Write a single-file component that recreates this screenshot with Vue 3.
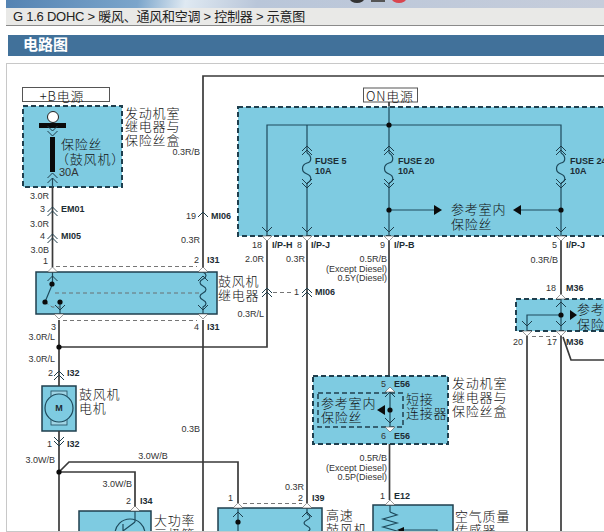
<script setup>
// boxes, wires and labels of the schematic, in page pixels
const blueBoxes = [
  { x: 23, y: 106, w: 99, h: 81, dashed: true },
  { x: 238, y: 107, w: 380, h: 129, dashed: true },
  { x: 36, y: 272, w: 181, h: 42 },
  { x: 42, y: 386, w: 34, h: 45 },
  { x: 516, y: 299, w: 100, h: 32, dashed: true },
  { x: 313, y: 376, w: 135, h: 68, dashed: true },
  { x: 79, y: 511, w: 72, h: 40 },
  { x: 218, y: 508, w: 104, h: 40 },
  { x: 373, y: 505, w: 80, h: 40 }
]

const wires = [
  'M203 270V76H610',
  'M203 320V540',
  'M52.5 187V267',
  'M59 320V386',
  'M59 347H267V236',
  'M307 236V503',
  'M389 102V106',
  'M389 236V375',
  'M389.5 444V500',
  'M561 236V294',
  'M561 336V540',
  'M563 337L571 360H610',
  'M527 336V540',
  'M59 431V540',
  'M59 472L69 462H238V503',
  'M59 472H135V507'
]

const innerWires = [
  'M267 236V125H561V153',
  'M561 183V236',
  'M307 125V153',
  'M307 183V236',
  'M389 106V153',
  'M389 183V236',
  'M389 210H434',
  'M521 210H561',
  'M52.5 178V187',
  'M52.5 267V284L45 302',
  'M60 302V314',
  'M561 299V331',
  'M527 331V315H561',
  'M390 388V426',
  'M135 511V522',
  'M238 508V532',
  'M307 508V514',
  'M390 505V512'
]

const dashed = [
  'M56 266.5H197',
  'M63 320.5H197',
  'M55 293H200',
  'M273 292.5H293',
  'M45 302L52 307H60',
  'M243 503.5H302',
  'M532 336.5H556'
]

const chevrons = [
  { x: 52.5, y: 136, dir: 1 }, { x: 52.5, y: 131, dir: 1 },
  { x: 52.5, y: 173, dir: -1 }, { x: 52.5, y: 178, dir: -1 },
  { x: 52.5, y: 207, dir: -1 }, { x: 52.5, y: 211, dir: -1 },
  { x: 52.5, y: 234, dir: -1 }, { x: 52.5, y: 238, dir: -1 },
  { x: 59, y: 371, dir: -1 }, { x: 59, y: 375, dir: -1 },
  { x: 59, y: 442, dir: 1 }, { x: 59, y: 446, dir: 1 },
  { x: 203, y: 212, dir: -1 },
  { x: 267, y: 288, dir: -1 }, { x: 267, y: 292, dir: -1 },
  { x: 307, y: 288, dir: -1 }, { x: 307, y: 292, dir: -1 },
  { x: 307, y: 146, dir: -1 }, { x: 307, y: 150, dir: -1 },
  { x: 389, y: 146, dir: -1 }, { x: 389, y: 150, dir: -1 },
  { x: 561, y: 146, dir: -1 }, { x: 561, y: 150, dir: -1 },
  { x: 307, y: 184, dir: 1 }, { x: 307, y: 188, dir: 1 },
  { x: 389, y: 184, dir: 1 }, { x: 389, y: 188, dir: 1 },
  { x: 561, y: 184, dir: 1 }, { x: 561, y: 188, dir: 1 },
  { x: 267, y: 232, dir: 1 }, { x: 307, y: 232, dir: 1 },
  { x: 389, y: 232, dir: 1 }, { x: 561, y: 232, dir: 1 },
  { x: 561, y: 302, dir: -1 }, { x: 561, y: 326, dir: 1 }, { x: 527, y: 326, dir: 1 },
  { x: 390, y: 392, dir: -1 }, { x: 390, y: 423, dir: 1 },
  { x: 60, y: 310, dir: 1 }, { x: 52.5, y: 276, dir: -1 },
  { x: 203, y: 276, dir: -1 }, { x: 203, y: 310, dir: 1 },
  { x: 238, y: 512, dir: -1 }, { x: 307, y: 512, dir: -1 }
]

// small white pin notches sitting on a box edge
const pins = [
  { x: 52.5, y: 272, dir: -1 }, { x: 203, y: 272, dir: -1 },
  { x: 59, y: 314, dir: 1 }, { x: 203, y: 314, dir: 1 },
  { x: 267, y: 236, dir: 1 }, { x: 307, y: 236, dir: 1 },
  { x: 389, y: 236, dir: 1 }, { x: 561, y: 236, dir: 1 },
  { x: 561, y: 299, dir: -1 }, { x: 527, y: 331, dir: 1 }, { x: 561, y: 331, dir: 1 },
  { x: 390, y: 392, dir: -1 }, { x: 390, y: 427, dir: 1 },
  { x: 135, y: 511, dir: -1 }, { x: 238, y: 508, dir: -1 }, { x: 307, y: 508, dir: -1 },
  { x: 390, y: 505, dir: -1 }
]

const dots = [
  [59, 347], [389, 125], [389, 210], [561, 210], [52, 284], [45, 302], [60, 302],
  [561, 315], [390, 410], [59, 472], [238, 522]
]

const coils = [307, 389, 561]

const labels = [
  { t: '0.3R/B', x: 200, y: 152, e: 1 },
  { t: '3.0R', x: 49, y: 196, e: 1 },
  { t: '3', x: 45, y: 209, e: 1 }, { t: 'EM01', x: 61, y: 209, b: 1 },
  { t: '3.0R', x: 49, y: 224, e: 1 },
  { t: '4', x: 45, y: 236, e: 1 }, { t: 'MI05', x: 61, y: 236, b: 1 },
  { t: '3.0B', x: 49, y: 250, e: 1 },
  { t: '1', x: 48, y: 261, e: 1 }, { t: '2', x: 199, y: 260, e: 1 }, { t: 'I31', x: 207, y: 260, b: 1 },
  { t: '3', x: 56, y: 327, e: 1 }, { t: '4', x: 199, y: 327, e: 1 }, { t: 'I31', x: 207, y: 327, b: 1 },
  { t: '3.0R/L', x: 55, y: 337, e: 1 }, { t: '3.0R/L', x: 55, y: 359, e: 1 },
  { t: '2', x: 53, y: 373, e: 1 }, { t: 'I32', x: 67, y: 373, b: 1 },
  { t: 'M', x: 59, y: 408, a: 'middle', b: 1 },
  { t: '1', x: 52, y: 444, e: 1 }, { t: 'I32', x: 67, y: 444, b: 1 },
  { t: '3.0W/B', x: 55, y: 460, e: 1 },
  { t: '3.0W/B', x: 153, y: 456, a: 'middle' },
  { t: '3.0W/B', x: 132, y: 484, e: 1 },
  { t: '2', x: 131, y: 501, e: 1 }, { t: 'I34', x: 140, y: 501, b: 1 },
  { t: '0.3B', x: 200, y: 429, e: 1 },
  { t: '19', x: 196, y: 216, e: 1 }, { t: 'MI06', x: 211, y: 216, b: 1 },
  { t: '0.3R', x: 200, y: 240, e: 1 },
  { t: 'FUSE 5', x: 315, y: 161, b: 1 }, { t: '10A', x: 315, y: 171, b: 1 },
  { t: 'FUSE 20', x: 398, y: 161, b: 1 }, { t: '10A', x: 398, y: 171, b: 1 },
  { t: 'FUSE 24', x: 570, y: 161, b: 1 }, { t: '10A', x: 570, y: 171, b: 1 },
  { t: '18', x: 262, y: 245, e: 1 }, { t: 'I/P-H', x: 272, y: 245, b: 1 },
  { t: '8', x: 302, y: 245, e: 1 }, { t: 'I/P-J', x: 311, y: 245, b: 1 },
  { t: '9', x: 385, y: 245, e: 1 }, { t: 'I/P-B', x: 394, y: 245, b: 1 },
  { t: '5', x: 557, y: 245, e: 1 }, { t: 'I/P-J', x: 566, y: 245, b: 1 },
  { t: '2.0R', x: 264, y: 259, e: 1 }, { t: '0.3R', x: 305, y: 259, e: 1 },
  { t: '0.5R/B', x: 387, y: 259, e: 1 }, { t: '(Except Diesel)', x: 387, y: 269, e: 1 },
  { t: '0.5Y(Diesel)', x: 387, y: 278, e: 1 },
  { t: '0.3R/B', x: 558, y: 260, e: 1 },
  { t: '0.3R/L', x: 264, y: 314, e: 1 },
  { t: '1', x: 299, y: 292, e: 1 }, { t: 'MI06', x: 315, y: 292, b: 1 },
  { t: '18', x: 556, y: 288, e: 1 }, { t: 'M36', x: 566, y: 288, b: 1 },
  { t: '20', x: 523, y: 342, e: 1 }, { t: '17', x: 557, y: 342, e: 1 }, { t: 'M36', x: 566, y: 342, b: 1 },
  { t: '5', x: 386, y: 384, e: 1 }, { t: 'E56', x: 394, y: 384, b: 1 },
  { t: '6', x: 386, y: 436, e: 1 }, { t: 'E56', x: 394, y: 436, b: 1 },
  { t: '0.5R/B', x: 387, y: 458, e: 1 }, { t: '(Except Diesel)', x: 387, y: 468, e: 1 },
  { t: '0.5P(Diesel)', x: 387, y: 477, e: 1 },
  { t: '0.3R', x: 304, y: 487, e: 1 },
  { t: '1', x: 233, y: 498, e: 1 }, { t: '2', x: 303, y: 498, e: 1 }, { t: 'I39', x: 312, y: 498, b: 1 },
  { t: '1', x: 385, y: 496, e: 1 }, { t: 'E12', x: 394, y: 496, b: 1 }
]

const captions = [
  { t: '发动机室', x: 125, y: 112 }, { t: '继电器与', x: 125, y: 125 }, { t: '保险丝盒', x: 125, y: 139 },
  { t: '保险丝', x: 61, y: 143 }, { t: '（鼓风机）', x: 56, y: 158 },
  { t: '鼓风机', x: 218, y: 280 }, { t: '继电器', x: 218, y: 294 },
  { t: '鼓风机', x: 79, y: 393 }, { t: '电机', x: 79, y: 407 },
  { t: '大功率', x: 154, y: 519 }, { t: '三极管', x: 154, y: 533 },
  { t: '参考室内', x: 451, y: 208 }, { t: '保险丝', x: 451, y: 223 },
  { t: '参考', x: 577, y: 308 }, { t: '保险', x: 577, y: 323 },
  { t: '参考室内', x: 321, y: 402 }, { t: '保险丝', x: 321, y: 416 },
  { t: '短接', x: 406, y: 398 }, { t: '连接器', x: 406, y: 412 },
  { t: '发动机室', x: 452, y: 382 }, { t: '继电器与', x: 452, y: 396 }, { t: '保险丝盒', x: 452, y: 410 },
  { t: '高速', x: 326, y: 514 }, { t: '鼓风机', x: 326, y: 528 },
  { t: '空气质量', x: 455, y: 515 }, { t: '传感器', x: 455, y: 529 }
]

function chevronPath(c) {
  return `M${c.x - 5} ${c.y + 5 * -c.dir}L${c.x} ${c.y}L${c.x + 5} ${c.y + 5 * -c.dir}`
}

function pinPath(p) {
  return `M${p.x - 5} ${p.y}L${p.x} ${p.y + 5 * p.dir}L${p.x + 5} ${p.y}Z`
}

function coilPath(x) {
  return `M${x} 153c5 3 5 9 0 10c-6 2 -6 9 0 11c5 2 5 7 0 9`
}
</script>

<template>
  <div class="page">
    <div class="banner">
      <svg width="598" height="8">
        <ellipse cx="351" cy="-1" rx="7" ry="4" fill="#333" />
        <rect x="365" y="0" width="14" height="2" fill="#555" />
        <ellipse cx="393" cy="-1" rx="7" ry="4" fill="#d9454f" />
      </svg>
    </div>
    <div class="crumbs">G 1.6 DOHC &gt; 暖风、通风和空调 &gt; 控制器 &gt; 示意图</div>
    <div class="title">电路图</div>
    <div class="card">
      <svg class="diagram" width="597" height="468" viewBox="7 64 597 468">
        <rect class="tag" x="22.5" y="87.5" width="87" height="14" />
        <text class="cn" x="62" y="95" text-anchor="middle">+B电源</text>
        <rect class="tag" x="363.5" y="88" width="54" height="14" />
        <text class="cn" x="390" y="95" text-anchor="middle">ON电源</text>

        <template v-for="(b, i) in blueBoxes" :key="i">
          <rect class="box" :class="{ dashed: b.dashed }" :x="b.x" :y="b.y" :width="b.w" :height="b.h" />
        </template>
        <rect class="box-inner" x="318" y="393" width="85" height="34" />

        <path v-for="(d, i) in wires" :key="'w' + i" class="wire" :d="d" />
        <path v-for="(d, i) in innerWires" :key="'n' + i" class="inner" :d="d" />
        <path v-for="(d, i) in dashed" :key="'d' + i" class="dash" :d="d" />
        <path v-for="(x, i) in coils" :key="'c' + i" class="inner" :d="coilPath(x)" />

        <!-- relay coil -->
        <path class="inner" d="M203 272c4 2 4 5 0 7c-4 2 -4 5 0 7c4 2 4 5 0 7c-4 2 -4 5 0 7c4 2 4 5 0 7l0 7" />
        <!-- high speed blower coil -->
        <path class="inner" d="M307 514c4 2 4 4 0 6c-4 2 -4 4 0 6c4 2 4 4 0 6" />
        <!-- air mass sensor zigzag -->
        <path class="inner" d="M390 512l7 3l-14 4l14 4l-14 4l14 4l-7 3" />
        <path class="inner" d="M404 530H437V532" />
        <path class="solid" d="M404 527v6l-7 -3z" />

        <!-- main fuse -->
        <circle class="lamp" cx="53" cy="117" r="5.5" />
        <rect class="solid" x="39" y="123" width="27" height="5" />
        <rect class="solid" x="50" y="137" width="5" height="35" />

        <!-- blower motor -->
        <rect class="brush" x="51" y="391" width="16" height="34" />
        <circle class="motor" cx="59" cy="408" r="14" />

        <!-- power transistor -->
        <circle class="inner" cx="130" cy="534" r="15" />
        <path class="inner" d="M135 522L123 531M123 524V544" />

        <path class="solid" d="M434 205v10l8 -5z" />
        <path class="solid" d="M521 205v10l-8 -5z" />
        <path class="solid" d="M570 310v10l7 -5z" />
        <path class="solid" d="M385 405v10l-8 -5z" />

        <path v-for="(p, i) in pins" :key="'p' + i" class="pin" :d="pinPath(p)" />
        <path v-for="(c, i) in chevrons" :key="'v' + i" class="chevron" :d="chevronPath(c)" />
        <circle v-for="(d, i) in dots" :key="'o' + i" class="solid" :cx="d[0]" :cy="d[1]" r="2.6" />

        <text
          v-for="(l, i) in labels"
          :key="'l' + i"
          class="lbl"
          :class="{ strong: l.b }"
          :x="l.x"
          :y="l.y"
          :text-anchor="l.e ? 'end' : l.a || 'start'"
        >{{ l.t }}</text>
        <text class="lbl big" x="59" y="172">30A</text>
        <text v-for="(c, i) in captions" :key="'t' + i" class="cn" :x="c.x" :y="c.y">{{ c.t }}</text>
      </svg>
    </div>
  </div>
</template>

<style scoped>
.page {
  width: 604px;
  height: 532px;
  display: flex;
  flex-direction: column;
  overflow: hidden;
  font-family: "Liberation Sans", "Noto Sans CJK SC", sans-serif;
}
.banner {
  height: 8px;
  margin-left: 6px;
  flex: none;
  background: linear-gradient(100deg, #5483b2 0%, #7ba5cb 22%, #dfe9f2 30%, #b9c6d9 42%, #c6cddb 100%);
}
.banner svg { display: block; }
.crumbs {
  height: 17px;
  line-height: 17px;
  margin-left: 6px;
  padding-left: 7px;
  flex: none;
  font-size: 13px;
  letter-spacing: -0.25px;
  color: #222;
  background: #e9e9e7;
  border-bottom: 1px solid #8a8a8a;
  white-space: nowrap;
}
.title {
  height: 21px;
  line-height: 20px;
  margin: 9px 0 7px 8px;
  padding-left: 15px;
  flex: none;
  font-size: 15px;
  font-weight: bold;
  color: #fff;
  background: #41719a;
}
.card {
  flex: 1;
  margin-left: 6px;
  border: 1px solid #c8c8c8;
  border-right: none;
  background: #fff;
  overflow: hidden;
}
.diagram { display: block; }
.tag { fill: #fff; stroke: #555; stroke-width: 1; }
.box { fill: #7ecbe1; stroke: #1f3f4e; stroke-width: 1.5; }
.box.dashed { stroke-width: 2; stroke-dasharray: 5 3; }
.box-inner { fill: none; stroke: #1f3f4e; stroke-width: 1.5; stroke-dasharray: 5 3; }
.wire { fill: none; stroke: #3a3a3a; stroke-width: 1.7; }
.inner { fill: none; stroke: #1e4a5c; stroke-width: 1.2; }
.dash { fill: none; stroke: #666; stroke-width: 0.9; stroke-dasharray: 4 3; }
.chevron { fill: none; stroke: #1e3e4c; stroke-width: 1; }
.pin { fill: #fff; stroke: #555; stroke-width: 0.6; }
.solid { fill: #0b0b0b; }
.lamp { fill: #fff; stroke: #222; stroke-width: 1; }
.brush { fill: #9fd4e4; stroke: #1e4a5c; stroke-width: 0.8; }
.motor { fill: #7ecbe1; stroke: #1e4a5c; stroke-width: 1.2; }
.lbl {
  font-family: "Liberation Sans", sans-serif;
  font-size: 9px;
  fill: #333;
  dominant-baseline: central;
}
.lbl.strong { font-weight: bold; fill: #1c2c34; }
.lbl.big { font-size: 11px; }
.cn {
  font-family: "Noto Sans CJK SC", "Liberation Sans", sans-serif;
  font-size: 13px;
  font-weight: 300;
  letter-spacing: 0.8px;
  fill: #111;
  dominant-baseline: central;
}
</style>

<style>
html, body { margin: 0; background: #fff; overflow: hidden; }
</style>
